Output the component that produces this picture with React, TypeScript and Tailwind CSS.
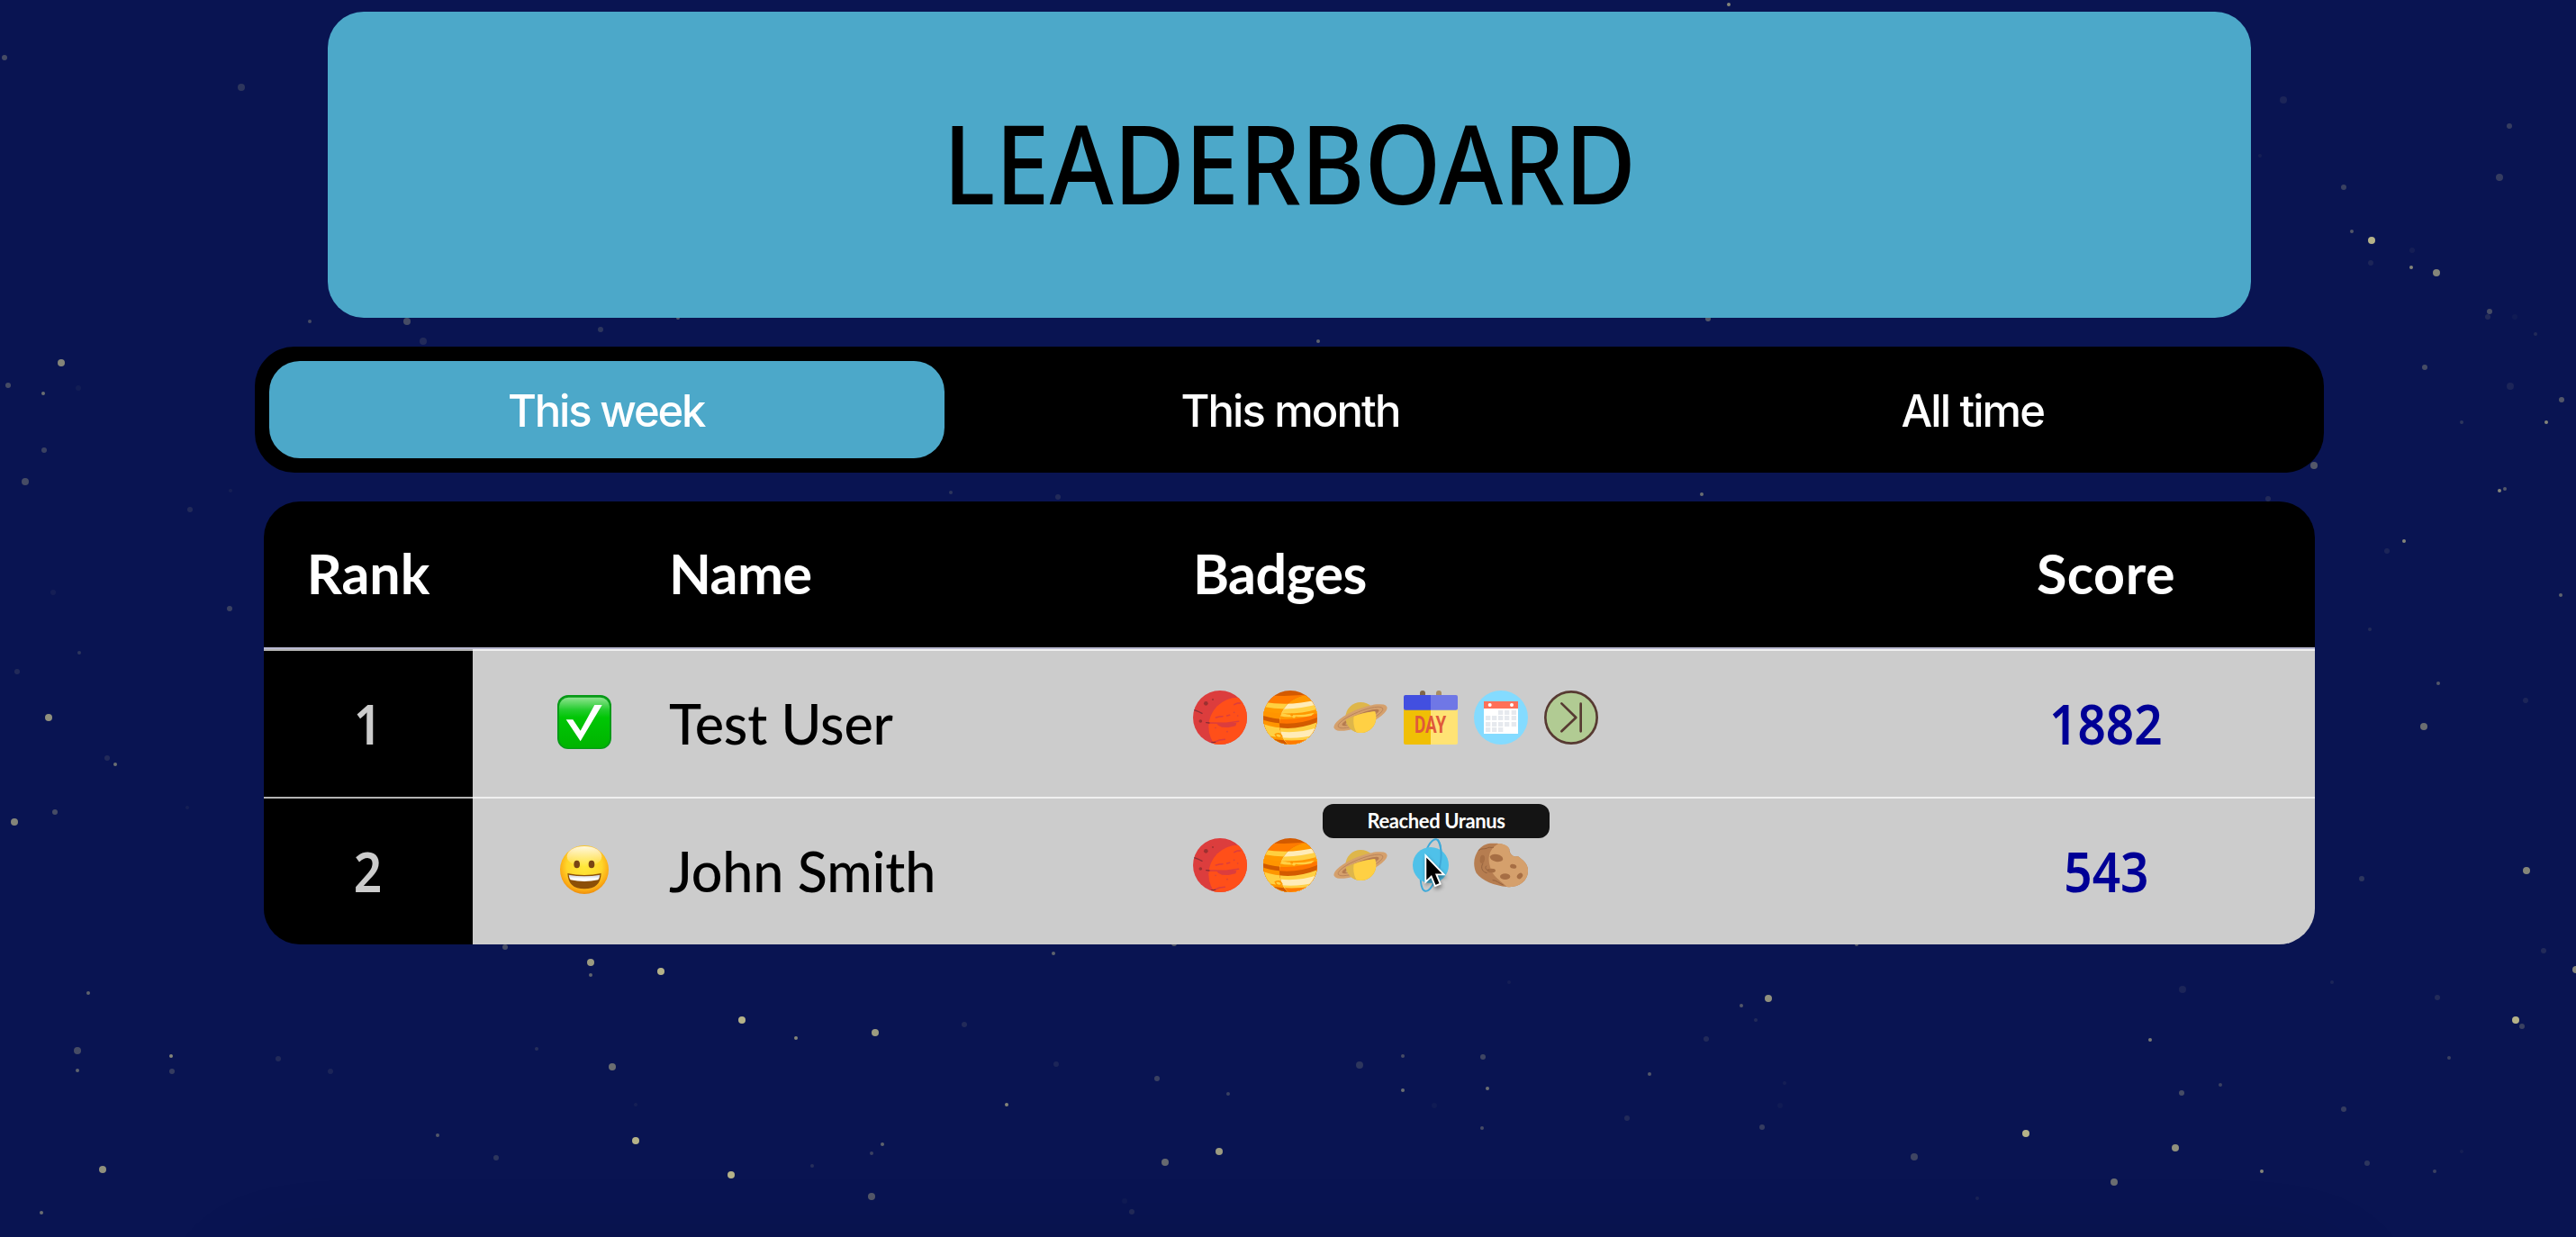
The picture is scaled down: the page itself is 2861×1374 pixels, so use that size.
import React from "react";

type Star = [x: number, y: number, r: number, alpha: number];

const STARS: Star[] = [
  [5, 64, 3, 0.25], [268, 97, 4, 0.15], [344, 357, 2, 0.25], [452, 357, 4, 0.25], [753, 353, 2, 0.3],
  [667, 366, 3, 0.15], [470, 379, 4, 0.1], [68, 403, 4, 0.5], [9, 428, 3, 0.25], [48, 437, 2, 0.4],
  [87, 431, 3, 0.04], [49, 500, 3, 0.2], [28, 535, 4, 0.25], [256, 545, 2, 0.05], [211, 566, 3, 0.1],
  [59, 658, 3, 0.05], [255, 676, 3, 0.2], [88, 725, 2, 0.15], [19, 746, 3, 0.1], [54, 797, 4, 0.55],
  [119, 842, 3, 0.1], [128, 849, 2, 0.4], [208, 897, 2, 0.05], [61, 902, 3, 0.25], [16, 913, 4, 0.5],
  [1897, 354, 3, 0.3], [1464, 379, 2, 0.35], [1056, 547, 2, 0.15], [1175, 552, 3, 0.1], [1890, 549, 2, 0.4],
  [1920, 5, 2, 0.5], [2536, 111, 4, 0.08], [2787, 140, 3, 0.18], [2510, 173, 2, 0.05], [2603, 208, 3, 0.2],
  [2776, 197, 4, 0.18], [2612, 257, 2, 0.3], [2634, 267, 4, 0.7], [2679, 278, 3, 0.05], [2633, 292, 3, 0.08],
  [2678, 297, 2, 0.5], [2706, 303, 4, 0.5], [2765, 346, 3, 0.25], [2763, 352, 3, 0.1], [2793, 352, 3, 0.03],
  [2816, 371, 2, 0.1], [2693, 408, 3, 0.25], [2788, 429, 4, 0.08], [2845, 444, 3, 0.3], [2734, 469, 2, 0.15],
  [2828, 469, 2, 0.5], [2570, 517, 4, 0.3], [2776, 545, 2, 0.5], [2782, 543, 2, 0.3], [2519, 554, 3, 0.1],
  [2670, 601, 2, 0.5], [2651, 612, 3, 0.08], [2844, 661, 2, 0.35], [2632, 699, 2, 0.1], [2708, 759, 2, 0.3],
  [2805, 778, 3, 0.08], [2692, 807, 4, 0.4], [2806, 967, 4, 0.5], [2623, 976, 3, 0.15], [2825, 1056, 3, 0.1],
  [561, 1052, 3, 0.25], [656, 1069, 4, 0.6], [734, 1079, 4, 0.7], [656, 1083, 2, 0.35], [98, 1103, 2, 0.35],
  [824, 1133, 4, 0.7], [972, 1147, 4, 0.6], [884, 1153, 2, 0.5], [596, 1165, 2, 0.12], [86, 1167, 4, 0.25],
  [190, 1173, 2, 0.5], [309, 1176, 3, 0.1], [86, 1189, 2, 0.35], [191, 1190, 3, 0.18], [367, 1190, 3, 0.08],
  [680, 1185, 4, 0.4], [706, 1227, 2, 0.05], [486, 1261, 2, 0.3], [706, 1267, 4, 0.7], [551, 1286, 3, 0.15],
  [114, 1299, 4, 0.55], [812, 1305, 4, 0.7], [980, 1271, 2, 0.35], [968, 1281, 2, 0.2], [902, 1295, 2, 0.12],
  [968, 1329, 4, 0.3], [46, 1347, 2, 0.4], [1304, 1048, 3, 0.3], [1170, 1059, 2, 0.35], [1676, 1091, 2, 0.05],
  [1071, 1138, 3, 0.1], [1895, 1154, 3, 0.1], [1558, 1173, 2, 0.25], [1647, 1174, 3, 0.22], [1510, 1183, 4, 0.15],
  [1173, 1182, 3, 0.08], [1285, 1198, 3, 0.2], [1832, 1193, 2, 0.3], [1364, 1215, 2, 0.2], [1558, 1211, 2, 0.4],
  [1652, 1209, 2, 0.4], [1118, 1227, 2, 0.5], [1593, 1228, 3, 0.03], [1807, 1242, 3, 0.1], [1646, 1253, 2, 0.25],
  [1354, 1279, 4, 0.6], [1294, 1291, 4, 0.38], [1249, 1334, 3, 0.03], [1257, 1346, 3, 0.1], [2062, 1049, 2, 0.3],
  [2861, 1077, 4, 0.5], [1964, 1109, 4, 0.55], [1934, 1117, 2, 0.3], [1950, 1133, 2, 0.1], [2424, 1099, 4, 0.08],
  [2590, 1091, 2, 0.08], [2707, 1108, 3, 0.1], [2794, 1133, 4, 0.7], [2801, 1140, 3, 0.2], [2388, 1155, 2, 0.45],
  [2720, 1175, 2, 0.2], [1982, 1203, 2, 0.05], [2466, 1205, 2, 0.2], [2423, 1214, 3, 0.25], [1977, 1228, 3, 0.03],
  [2603, 1232, 3, 0.18], [1957, 1252, 3, 0.18], [2250, 1259, 4, 0.7], [2416, 1275, 4, 0.55], [2126, 1285, 4, 0.22],
  [2348, 1313, 4, 0.4], [2734, 1279, 2, 0.05], [2629, 1292, 3, 0.15], [2512, 1301, 2, 0.5], [2704, 1301, 2, 0.2],
  [2196, 1331, 2, 0.07],
];

function Sky() {
  return (
    <div className="absolute inset-0 overflow-hidden">
      <svg className="absolute inset-0" width="2861" height="1374" viewBox="0 0 2861 1374">
        {STARS.map(([x, y, r, a], i) => (
          <circle key={i} cx={x} cy={y} r={r} fill="#fff5a0" fillOpacity={a} />
        ))}
      </svg>
      <div className="absolute left-[290px] top-[1435px] h-40 w-[2284px] rounded-[40px] shadow-[0_0_100px_20px_rgba(0,0,0,0.3)]" />
    </div>
  );
}

function Mars() {
  return (
    <svg viewBox="0 0 180 180" className="size-[60px]">
      <defs>
        <clipPath id="mars"><circle cx="90" cy="90" r="90" /></clipPath>
      </defs>
      <g clipPath="url(#mars)">
        <rect width="180" height="180" fill="#dc3d3d" />
        <circle cx="150" cy="121" r="98" fill="#ff4f19" />
        <g stroke="#dc3d3d" strokeWidth="4.5" fill="none" strokeLinecap="round">
          <path d="M137 47 L148 42 L158 42" />
          <path d="M76 90 L88 87 L99 86 M113 84 L122 82 M74 171 L88 165 L106 163" />
          <path d="M52 108 L110 109 L152 103" />
        </g>
        <path d="M78 108 L145 108 L142 118 L118 123 L96 122 L84 116 Z" fill="#dc3d3d" />
        <g fill="#d6433c">
          <circle cx="137" cy="73" r="2.5" /><circle cx="149" cy="84" r="2.5" />
          <circle cx="75" cy="124" r="2.5" /><circle cx="114" cy="137" r="2.5" />
        </g>
        <g fill="#9c3030">
          <circle cx="43" cy="43" r="7" /><circle cx="66" cy="30" r="3" /><circle cx="25" cy="102" r="5.5" />
        </g>
        <path d="M4 65 L16 69 L30 76 M44 107 L54 108 M62 173 L74 172" stroke="#8b2f35" strokeWidth="4" fill="none" strokeLinecap="round" />
      </g>
    </svg>
  );
}

function JupiterBands({ c }: { c: string[] }) {
  return (
    <>
      <rect width="180" height="180" fill={c[0]} />
      <path d="M0 14 Q90 24 180 8 V180 H0 Z" fill={c[1]} />
      <path d="M0 38 Q90 54 180 30 V180 H0 Z" fill={c[2]} />
      <path d="M0 54 Q90 72 180 46 V180 H0 Z" fill={c[3]} />
      <path d="M0 68 Q90 88 180 62 V180 H0 Z" fill={c[4]} />
      <path d="M0 84 Q90 112 180 76 V180 H0 Z" fill={c[5]} />
      <path d="M0 98 Q90 126 180 90 V180 H0 Z" fill={c[6]} />
      <path d="M0 112 Q90 142 180 106 V180 H0 Z" fill={c[7]} />
      <path d="M0 126 Q90 152 180 124 V180 H0 Z" fill={c[8]} />
      <path d="M0 146 Q90 170 180 146 V180 H0 Z" fill={c[9]} />
      <path d="M0 154 Q90 178 180 156 V180 H0 Z" fill={c[10]} />
    </>
  );
}

function Jupiter() {
  return (
    <svg viewBox="0 0 180 180" className="size-[60px]">
      <defs>
        <clipPath id="jup"><circle cx="90" cy="90" r="90" /></clipPath>
        <clipPath id="jupLit"><circle cx="150" cy="112" r="96" /></clipPath>
      </defs>
      <g clipPath="url(#jup)">
        <JupiterBands c={["#d35a00", "#ff7b00", "#ffd040", "#ff9a00", "#ff9500", "#d05a00", "#ff9500", "#ffd044", "#ffd044", "#ff9800", "#d35a00"]} />
        <g clipPath="url(#jupLit)">
          <JupiterBands c={["#d35a00", "#ff9800", "#ffecb8", "#ffd044", "#ff9800", "#ff7600", "#d35a00", "#ffd044", "#ffecb8", "#ffd044", "#ff7b00"]} />
          <path d="M54 72 Q100 90 170 74 L160 84 Q130 90 108 86 Q104 96 96 88 Q74 90 54 84 Z" fill="#ffd044" />
          <circle cx="95" cy="81" r="4.500" fill="#ff9500" />
        </g>
        <path d="M40 146 Q54 138 62 152 Q56 162 44 154 Z" fill="none" stroke="#ff9800" strokeWidth="4.500" />
      </g>
    </svg>
  );
}

function Saturn() {
  return (
    <svg viewBox="0 0 180 180" className="size-[60px]">
      <defs>
        <clipPath id="satBall"><circle cx="91" cy="90" r="51" /></clipPath>
      </defs>
      <g clipPath="url(#satBall)">
        <rect width="180" height="180" fill="#deb64a" />
      </g>
      <g transform="rotate(-22 90 90)">
        <ellipse cx="90" cy="90" rx="95" ry="29" fill="#d5a06c" />
        <ellipse cx="90" cy="90" rx="80" ry="20" fill="none" stroke="#b8835a" strokeWidth="2.500" />
        <ellipse cx="90" cy="90" rx="66" ry="13" fill="#b57b50" />
        <ellipse cx="90" cy="93" rx="55" ry="10" fill="#cba06c" />
      </g>
      <g clipPath="url(#satBall)">
        <path d="M38 98 Q90 72 144 69 V150 H38 Z" fill="#deb64a" />
        <path d="M68 86 Q104 71 144 69 V150 H84 Q62 122 68 86 Z" fill="#ffd044" />
      </g>
    </svg>
  );
}

function DayCalendar() {
  return (
    <svg viewBox="0 0 180 180" className="size-[60px]">
      <rect x="54" y="0" width="18" height="30" rx="9" fill="#806749" />
      <rect x="108" y="0" width="18" height="30" rx="9" fill="#a98d62" />
      <path d="M0 62 H90 V180 H6 Q0 180 0 174 Z" fill="#f0bf05" />
      <path d="M90 62 H180 V174 Q180 180 174 180 H90 Z" fill="#ffe374" />
      <path d="M6 15 H90 V65 H6 Q0 65 0 59 V21 Q0 15 6 15 Z" fill="#424fe0" />
      <path d="M90 15 H174 Q180 15 180 21 V59 Q180 65 174 65 H90 Z" fill="#6f77e6" />
      <text x="36" y="140" fontFamily="Roboto, sans-serif" fontWeight="700" fontSize="76" textLength="106" lengthAdjust="spacingAndGlyphs" fill="#e0593a">
        DAY
      </text>
    </svg>
  );
}

function MonthCalendar() {
  const cells: [number, number][] = [];
  [66, 84, 105, 123].forEach((y, row) =>
    [39, 60, 81, 102, 125].forEach((x, col) => {
      if (row === 0 && col < 2) return;
      if (row === 3 && col > 2) return;
      cells.push([x, y]);
    }),
  );
  return (
    <svg viewBox="0 0 180 180" className="size-[60px]">
      <circle cx="90" cy="90" r="90" fill="#84dbff" />
      <rect x="33" y="36" width="114" height="108" fill="#fff" />
      <rect x="33" y="36" width="114" height="24" fill="#ff7058" />
      <circle cx="53" cy="48" r="6" fill="#fff" />
      <circle cx="126" cy="48" r="6" fill="#fff" />
      {cells.map(([x, y]) => (
        <rect key={`${x}-${y}`} x={x} y={y} width="16" height="15" fill="#e6e9ee" />
      ))}
    </svg>
  );
}

function SkipBadge() {
  return (
    <svg viewBox="0 0 180 180" className="size-[60px]">
      <circle cx="90" cy="90" r="86" fill="#b1cb93" stroke="#573a32" strokeWidth="8" />
      <path d="M58 43 L106 90 L58 136 M122 44 V136" fill="none" stroke="#573a32" strokeWidth="8" strokeLinecap="round" strokeLinejoin="round" />
    </svg>
  );
}

function Uranus() {
  return (
    <svg viewBox="0 0 180 180" className="size-[60px]">
      <g fill="none" stroke="#3fa9d8" strokeWidth="6">
        <ellipse cx="90" cy="90" rx="29" ry="88" transform="rotate(12 90 90)" />
      </g>
      <circle cx="90" cy="90" r="60" fill="#4fc1e9" />
      <path d="M113 5 C130 30 128 80 112 120" fill="none" stroke="#3fa9d8" strokeWidth="6" />
    </svg>
  );
}

function Asteroid() {
  return (
    <svg viewBox="0 0 180 180" className="size-[60px]">
      <path d="M62 17 C90 16 110 22 118 36 C118 50 130 66 146 60 C166 74 182 88 180 112 C178 146 146 166 110 162 C70 158 26 142 8 116 C-4 92 -2 60 18 36 C30 22 44 17 62 17 Z" fill="#b67d50" />
      <path d="M82 18 C104 20 114 26 118 36 C116 50 130 66 146 60 C166 74 182 88 180 112 C178 146 146 166 110 162 C84 138 62 128 54 96 C44 66 50 36 82 18 Z" fill="#d5a06c" />
      <g fill="#a66e44">
        <ellipse cx="75" cy="66" rx="22" ry="12" transform="rotate(12 75 66)" />
        <ellipse cx="131" cy="94" rx="11" ry="7" transform="rotate(15 131 94)" />
        <ellipse cx="104" cy="128" rx="17" ry="10" />
        <ellipse cx="153" cy="126" rx="11" ry="8" transform="rotate(-45 153 126)" />
        <ellipse cx="58" cy="108" rx="14" ry="7" />
        <ellipse cx="28" cy="70" rx="8" ry="14" transform="rotate(8 28 70)" />
      </g>
      <path d="M14 42 C24 32 38 38 46 32 C54 28 60 34 66 30 M30 84 C20 100 30 114 44 116 M42 92 C34 100 42 108 50 106 M62 140 C76 140 82 150 98 156" fill="none" stroke="#94623e" strokeWidth="3" />
    </svg>
  );
}

function CheckEmoji() {
  return (
    <svg viewBox="0 0 180 180" className="size-[60px]">
      <defs>
        <linearGradient id="chk" x1="0" y1="0" x2="0" y2="1">
          <stop offset="0" stopColor="#8fe490" />
          <stop offset="0.25" stopColor="#22cc2c" />
          <stop offset="0.4" stopColor="#00c605" />
          <stop offset="1" stopColor="#00b400" />
        </linearGradient>
      </defs>
      <rect width="180" height="180" rx="36" fill="#079a17" />
      <rect x="6" y="8" width="168" height="168" rx="31" fill="url(#chk)" />
      <path d="M29 82 H52 L77 119 L124 33 H149 L77 154 Z" fill="#fff" />
    </svg>
  );
}

function GrinEmoji() {
  return (
    <svg viewBox="0 0 180 180" className="size-[60px]">
      <defs>
        <radialGradient id="face" cx="0.5" cy="0.42" r="0.6">
          <stop offset="0" stopColor="#ffe93a" />
          <stop offset="0.6" stopColor="#ffd62a" />
          <stop offset="0.85" stopColor="#fbaa14" />
          <stop offset="1" stopColor="#ea8508" />
        </radialGradient>
        <linearGradient id="shine" x1="0" y1="0" x2="0" y2="1">
          <stop offset="0" stopColor="#fff" stopOpacity="0.85" />
          <stop offset="1" stopColor="#fff" stopOpacity="0" />
        </linearGradient>
        <linearGradient id="teeth" x1="0" y1="0" x2="0" y2="1">
          <stop offset="0" stopColor="#c9ccd8" />
          <stop offset="0.6" stopColor="#ffffff" />
        </linearGradient>
      </defs>
      <circle cx="90" cy="90" r="81" fill="url(#face)" />
      <ellipse cx="90" cy="46" rx="58" ry="34" fill="url(#shine)" />
      <ellipse cx="65" cy="72" rx="10" ry="13" fill="#794414" />
      <ellipse cx="114" cy="72" rx="10" ry="13" fill="#794414" />
      <path d="M34 102 Q90 114 146 102 Q144 154 90 154 Q36 154 34 102 Z" fill="#8c4f07" />
      <path d="M38 107 Q90 117 142 107 Q141 118 136 124 Q90 134 44 124 Q39 118 38 107 Z" fill="url(#teeth)" />
    </svg>
  );
}

function Cursor() {
  return (
    <svg viewBox="0 0 72 114" className="absolute left-[23px] top-[18px] z-10 h-[38px] w-[24px] overflow-visible drop-shadow-[1px_3px_2px_rgba(0,0,0,0.4)]">
      <path d="M4 4 V92 L23 74 L36 105 L53 98 L40 67 H65 Z" fill="#000" stroke="#fff" strokeWidth="5.500" />
    </svg>
  );
}

function Tooltip({ label }: { label: string }) {
  return (
    <div className="absolute bottom-[60px] left-[-90px] flex h-[38px] w-[252px] items-center justify-center rounded-xl bg-[#141414] font-[Lato,sans-serif] text-[22px] font-bold leading-none tracking-[-0.4px] whitespace-nowrap text-white">
      {label}
    </div>
  );
}

type Player = { rank: number; avatar: React.ReactNode; name: string; badges: React.ReactNode[]; score: string };

const PLAYERS: Player[] = [
  {
    rank: 1,
    avatar: <CheckEmoji />,
    name: "Test User",
    badges: [<Mars />, <Jupiter />, <Saturn />, <DayCalendar />, <MonthCalendar />, <SkipBadge />],
    score: "1882",
  },
  {
    rank: 2,
    avatar: <GrinEmoji />,
    name: "John Smith",
    badges: [
      <Mars />,
      <Jupiter />,
      <Saturn />,
      <div className="relative">
        <Uranus />
        <Tooltip label="Reached Uranus" />
        <Cursor />
      </div>,
      <Asteroid />,
    ],
    score: "543",
  },
];

const TABS = ["This week", "This month", "All time"];

function Row({ player }: { player: Player }) {
  return (
    <div className="grid h-[164px] grid-cols-[232px_218px_582px_1fr_464px] text-[61px] leading-none">
      <div className="flex items-center justify-center border-t-2 border-[#b3b3b3] bg-black pb-[2px] pr-[2px] font-semibold text-[#cccccc]">
        <span className="scale-x-90">{player.rank}</span>
      </div>
      <div className="flex items-start border-t-2 border-[#f0f0f0] bg-[#cccccc] pl-[94px] pt-[49px]">{player.avatar}</div>
      <div className="flex items-center border-t-2 border-[#f0f0f0] bg-[#cccccc] pb-[2px] font-[Lato,sans-serif] font-medium tracking-[-0.1px]">{player.name}</div>
      <div className="flex items-start gap-[18px] border-t-2 border-[#f0f0f0] bg-[#cccccc] pt-[44px]">
        {player.badges.map((b, i) => (
          <div key={i} className="size-[60px]">{b}</div>
        ))}
      </div>
      <div className="flex items-center justify-center border-t-2 border-[#f0f0f0] bg-[#cccccc] pb-[2px] font-semibold text-[#000096]">
        <span className="scale-x-90">{player.score}</span>
      </div>
    </div>
  );
}

export default function App() {
  return (
    <div className="relative h-[1374px] w-[2861px] overflow-hidden bg-[#091452] font-['Noto_Sans',sans-serif] text-black">
      <Sky />
      <main className="relative flex flex-col pt-[13px]">
        <header className="ml-[364px] flex h-[340px] w-[2136px] items-center justify-center rounded-[40px] bg-[#4ca8c9] pb-[6px]">
          <h1 className="scale-x-[0.888] text-[122px] font-medium leading-none">LEADERBOARD</h1>
        </header>
        <nav className="ml-[283px] mt-8 flex h-[140px] w-[2298px] gap-[9.5px] rounded-[44px] bg-black p-4 font-[Inter,sans-serif]">
          {TABS.map((t, i) => (
            <button
              key={t}
              className={
                i === 0
                  ? "flex-1 rounded-[34px] bg-[#4ca8c9] pt-[2px] pr-[2px] text-[49px] font-[450] leading-none tracking-[-2.2px] text-white"
                  : "flex-1 rounded-[34px] pt-[2px] text-[49px] font-[450] leading-none tracking-[-1.9px] text-white"
              }
            >
              {t}
            </button>
          ))}
        </nav>
        <section className="ml-[293px] mt-8 w-[2278px] overflow-hidden rounded-[40px]">
          <div className="grid h-[164px] grid-cols-[232px_218px_582px_1fr_464px] items-center border-b-2 border-[#b9b9d0] bg-black pb-[4px] font-[Lato,sans-serif] text-[61px] font-bold leading-none text-white">
            <div className="text-center">Rank</div>
            <div />
            <div className="tracking-[-0.6px]">Name</div>
            <div className="tracking-[-0.6px]">Badges</div>
            <div className="text-center tracking-[0.5px]">Score</div>
          </div>
          {PLAYERS.map((p) => (
            <Row key={p.rank} player={p} />
          ))}
        </section>
      </main>
    </div>
  );
}
